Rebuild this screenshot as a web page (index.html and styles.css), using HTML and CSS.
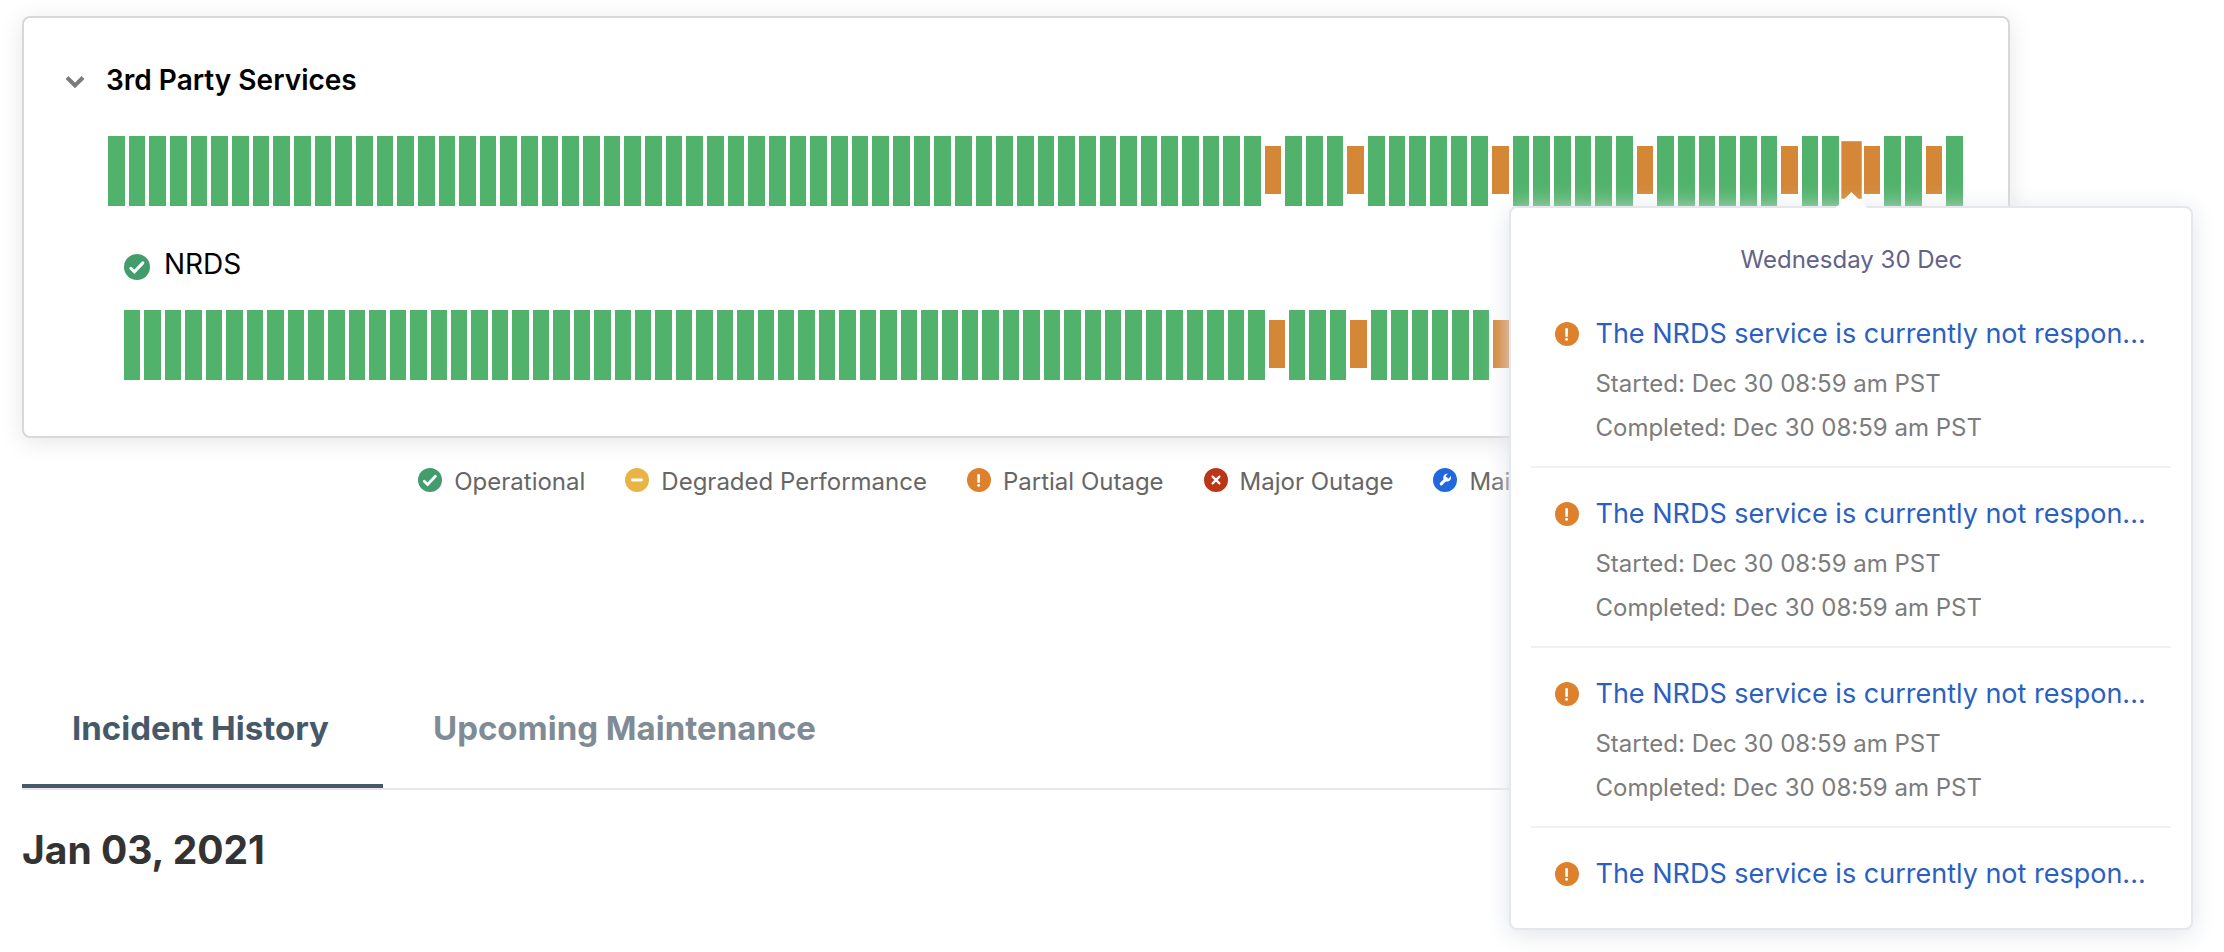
FILE: index.html
```html
<!DOCTYPE html>
<html lang="en">
<head>
<meta charset="utf-8">
<title>Service Status</title>
<link rel="stylesheet" href="styles.css">
</head>
<body>
<svg class="sprite" aria-hidden="true">
  <symbol id="i-ok" viewBox="0 0 24 24"><circle cx="12" cy="12" r="12" fill="#439c6c"/><path d="M6.3 13.2l3.3 3.3 7.8-8.3" fill="none" stroke="#fff" stroke-width="2.8" stroke-linecap="round" stroke-linejoin="miter"/></symbol>
  <symbol id="i-degraded" viewBox="0 0 24 24"><circle cx="12" cy="12" r="12" fill="#e8b444"/><path d="M7.4 12h9.2" fill="none" stroke="#fff" stroke-width="2.8" stroke-linecap="round"/></symbol>
  <symbol id="i-partial" viewBox="0 0 24 24"><circle cx="12" cy="12" r="12" fill="#de812c"/><path d="M11.6 7.2v6.6" fill="none" stroke="#fff" stroke-width="2.6" stroke-linecap="round"/><circle cx="11.6" cy="17.4" r="1.4" fill="#fff"/></symbol>
  <symbol id="i-major" viewBox="0 0 24 24"><circle cx="12" cy="12" r="12" fill="#bb3616"/><path d="M8.6 8.6l6.8 6.8M15.4 8.6l-6.8 6.8" fill="none" stroke="#fff" stroke-width="2.2" stroke-linecap="round"/></symbol>
  <symbol id="i-maint" viewBox="0 0 24 24"><circle cx="12" cy="12" r="12" fill="#2168de"/><path d="M8.2 15.9l5.2-5.2" fill="none" stroke="#fff" stroke-width="3" stroke-linecap="round"/><path d="M17.7 8.1a3.9 3.9 0 1 1-2.9-2.3l-2 2.1.4 2.3 2.4.3z" fill="#fff"/></symbol>
</svg>

<main class="page">
  <section class="card">
    <button class="group" type="button" aria-expanded="true">
      <svg class="chevron" viewBox="0 0 20 14" aria-hidden="true"><path d="M2 2.5l8 8 8-8" fill="none" stroke="#7b7b7b" stroke-width="4"/></svg>
      <span>3rd Party Services</span>
    </button>
    <div class="group-body">
      <div class="days" data-hover="84"></div>
      <div class="service">
        <h3 class="service-name"><svg class="service-icon"><use href="#i-ok"/></svg>NRDS</h3>
        <div class="days"></div>
      </div>
    </div>
  </section>

  <ul class="legend">
    <li><svg class="icon"><use href="#i-ok"/></svg>Operational</li>
    <li><svg class="icon"><use href="#i-degraded"/></svg>Degraded Performance</li>
    <li><svg class="icon"><use href="#i-partial"/></svg>Partial Outage</li>
    <li><svg class="icon"><use href="#i-major"/></svg>Major Outage</li>
    <li><svg class="icon"><use href="#i-maint"/></svg>Maintenance</li>
  </ul>

  <div class="tabs" role="tablist">
    <button class="tab tab-active" type="button" role="tab" aria-selected="true">Incident History</button>
    <button class="tab" type="button" role="tab" aria-selected="false">Upcoming Maintenance</button>
  </div>

  <h2 class="date">Jan 03, 2021</h2>
</main>

<aside class="popover">
  <p class="popover-date">Wednesday 30 Dec</p>
  <ul class="incidents">
    <li class="incident">
      <svg class="icon"><use href="#i-partial"/></svg>
      <a class="incident-title" href="#">The NRDS service is currently not respon...</a>
      <p class="incident-times">Started: Dec 30 08:59 am PST<br>Completed: Dec 30 08:59 am PST</p>
    </li>
    <li class="incident">
      <svg class="icon"><use href="#i-partial"/></svg>
      <a class="incident-title" href="#">The NRDS service is currently not respon...</a>
      <p class="incident-times">Started: Dec 30 08:59 am PST<br>Completed: Dec 30 08:59 am PST</p>
    </li>
    <li class="incident">
      <svg class="icon"><use href="#i-partial"/></svg>
      <a class="incident-title" href="#">The NRDS service is currently not respon...</a>
      <p class="incident-times">Started: Dec 30 08:59 am PST<br>Completed: Dec 30 08:59 am PST</p>
    </li>
    <li class="incident">
      <svg class="icon"><use href="#i-partial"/></svg>
      <a class="incident-title" href="#">The NRDS service is currently not respon...</a>
    </li>
  </ul>
</aside>
<script src="days.js"></script>
</body>
</html>
```

FILE: styles.css
```css
* { box-sizing: border-box; }

body {
  min-height: 100vh;
  margin: 0;
  background: #fff;
  color: #000;
  font-family: Inter, "Liberation Sans", sans-serif;
}

h2, h3, p, ul { margin: 0; padding: 0; }
ul { list-style: none; }
button { border: 0; background: none; padding: 0; font: inherit; color: inherit; cursor: pointer; }

.sprite { display: none; }
.icon { width: 24px; height: 24px; flex: none; }

.page { padding: 16px 214px 0 22px; }

.card {
  padding: 44px 45px 56px 40px;
  border: 2px solid #dbd6d8;
  border-radius: 8px;
  box-shadow: 0 4px 24px rgba(0, 0, 0, 0.1);
}

.group {
  display: flex;
  align-items: center;
  gap: 20px;
  font-size: 28px;
  font-weight: 600;
  line-height: 36px;
}
.chevron { width: 22px; height: 14px; margin-top: 4px; }

.group-body { padding: 38px 0 0 44px; }

.days { display: flex; gap: 4px; height: 70px; }
.day { position: relative; flex: 1 1 0; display: flex; align-items: center; }
.bar { width: 100%; height: 70px; background: #51b36b; }
.bar-partial { height: 48px; margin-bottom: 2px; background: #d38737; }
.bar-hover { transform: scale(1.2); }

.service { padding: 40px 4px 0 16px; }
.service-name {
  display: flex;
  align-items: center;
  gap: 14px;
  margin-bottom: 28px;
  font-size: 28px;
  font-weight: 400;
  line-height: 36px;
}
.service-icon { width: 26px; height: 26px; margin-top: 6px; }

.legend {
  display: flex;
  justify-content: center;
  gap: 40px;
  margin-top: 26px;
  padding-left: 2px;
  color: #666;
  font-size: 24px;
  line-height: 36px;
}
.legend li { display: flex; align-items: center; gap: 12px; }
.legend .icon { margin-bottom: 4px; }

.tabs {
  display: flex;
  margin-top: 168px;
  border-bottom: 2px solid #e6e6ec;
}
.tab {
  padding: 38px 54px 34px 50px;
  border-bottom: 4px solid transparent;
  color: #808b96;
  font-size: 33px;
  font-weight: 700;
  line-height: 44px;
}
.tab-active { border-color: #475969; color: #475969; }

.date {
  margin-top: 36px;
  color: #333;
  font-size: 39px;
  font-weight: 700;
  line-height: 48px;
}

.popover {
  position: absolute;
  z-index: 10;
  top: 100%;
  left: 50%;
  width: 684px;
  margin-left: -342px;
  padding: 36px 20px 40px;
  border: 2px solid #e6e7ed;
  border-radius: 8px;
  background: #fff;
  box-shadow: 0 4px 24px #dfe3ea;
}
.popover::before {
  content: "";
  position: absolute;
  top: -16px;
  left: 50%;
  width: 32px;
  height: 16px;
  margin-left: -16px;
  background: #fff;
  clip-path: polygon(50% 0, 100% 100%, 0 100%);
}
.popover-date {
  margin-bottom: 12px;
  color: #62628a;
  font-size: 24px;
  line-height: 32px;
  text-align: center;
}
.incident {
  display: grid;
  grid-template-columns: 24px 1fr;
  gap: 10px 16px;
  align-items: center;
  padding: 28px 20px 16px 24px;
  border-bottom: 2px solid #f1f1f3;
}
.incident:last-child { padding-bottom: 0; margin-bottom: -4px; border-bottom: 0; }
.incident-title {
  overflow: hidden;
  color: #2b5fc1;
  font-size: 27px;
  line-height: 36px;
  text-decoration: none;
  text-overflow: ellipsis;
  white-space: nowrap;
}
.incident-times {
  grid-column: 2;
  color: #7c7c7c;
  font-size: 24px;
  line-height: 44px;
}
```

FILE: days.js
```javascript
const DAY_COUNT = 90;
const partialDays = new Set([56, 60, 67, 74, 81, 84, 85, 88]);
const popover = document.querySelector('.popover');

document.querySelectorAll('.days').forEach((row) => {
  const hovered = Number(row.dataset.hover || -1);
  for (let i = 0; i < DAY_COUNT; i++) {
    const day = document.createElement('div');
    const bar = document.createElement('div');
    day.className = 'day';
    bar.className = 'bar';
    if (partialDays.has(i)) bar.classList.add('bar-partial');
    day.append(bar);
    if (i === hovered) {
      bar.classList.add('bar-hover');
      day.append(popover);
    }
    row.append(day);
  }
});
```
